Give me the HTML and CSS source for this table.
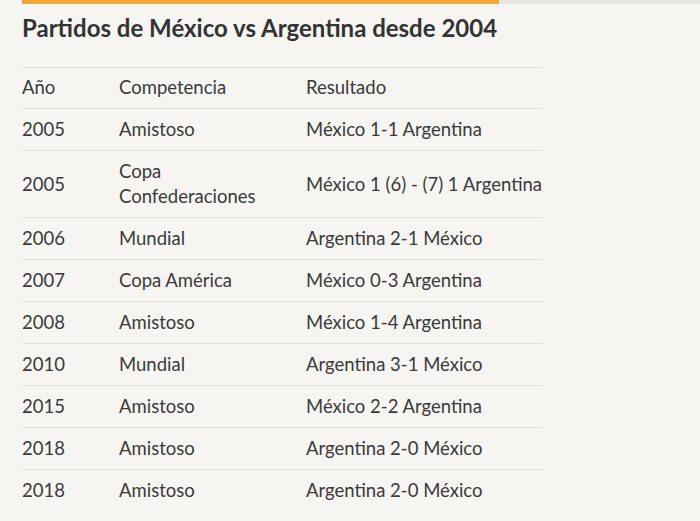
FILE: index.html
```html
<!DOCTYPE html>
<html lang="es">
<head>
<meta charset="utf-8">
<link rel="stylesheet" href="styles.css">
</head>
<body>
<div class="page">
  <div class="topbar"><div class="topbar-fill"></div></div>
  <h1 class="title">Partidos de México vs Argentina desde 2004</h1>
  <div class="table">
    <div class="row head"><div class="c1">Año</div><div class="c2">Competencia</div><div class="c3">Resultado</div></div>
    <div class="row"><div class="c1">2005</div><div class="c2">Amistoso</div><div class="c3">México 1-1 Argentina</div></div>
    <div class="row"><div class="c1">2005</div><div class="c2">Copa Confederaciones</div><div class="c3">México 1 (6) - (7) 1 Argentina</div></div>
    <div class="row"><div class="c1">2006</div><div class="c2">Mundial</div><div class="c3">Argentina 2-1 México</div></div>
    <div class="row"><div class="c1">2007</div><div class="c2">Copa América</div><div class="c3">México 0-3 Argentina</div></div>
    <div class="row"><div class="c1">2008</div><div class="c2">Amistoso</div><div class="c3">México 1-4 Argentina</div></div>
    <div class="row"><div class="c1">2010</div><div class="c2">Mundial</div><div class="c3">Argentina 3-1 México</div></div>
    <div class="row"><div class="c1">2015</div><div class="c2">Amistoso</div><div class="c3">México 2-2 Argentina</div></div>
    <div class="row"><div class="c1">2018</div><div class="c2">Amistoso</div><div class="c3">Argentina 2-0 México</div></div>
    <div class="row"><div class="c1">2018</div><div class="c2">Amistoso</div><div class="c3">Argentina 2-0 México</div></div>
  </div>
</div>
</body>
</html>
```

FILE: styles.css
```css
html, body {
  margin: 0;
  padding: 0;
  background: #f6f5f1;
}
.page {
  padding-left: 22px;
  font-family: "Lato", "Liberation Sans", sans-serif;
  color: #3a3a3a;
}
.topbar {
  height: 4px;
  background: #e6e5df;
}
.topbar-fill {
  width: 477px;
  height: 4px;
  background: #f5a733;
}
.title {
  margin: 9px 0 0;
  font-size: 24px;
  line-height: 30px;
  font-weight: 700;
  color: #333333;
  height: 54px;
  white-space: nowrap;
}
.table {
  width: 520px;
  border-top: 1px solid #e0dfda;
  font-size: 18.5px;
  line-height: 25px;
}
.row {
  display: grid;
  grid-template-columns: 97px 187px 1fr;
  align-items: center;
  border-bottom: 1px solid #e0dfda;
  padding: 8px 0;
}
.row:last-child {
  border-bottom: none;
}
.row.head {
  padding: 7px 0 8px;
}
.c2 {
  padding-right: 20px;
}
.c3 {
  white-space: nowrap;
}
```
